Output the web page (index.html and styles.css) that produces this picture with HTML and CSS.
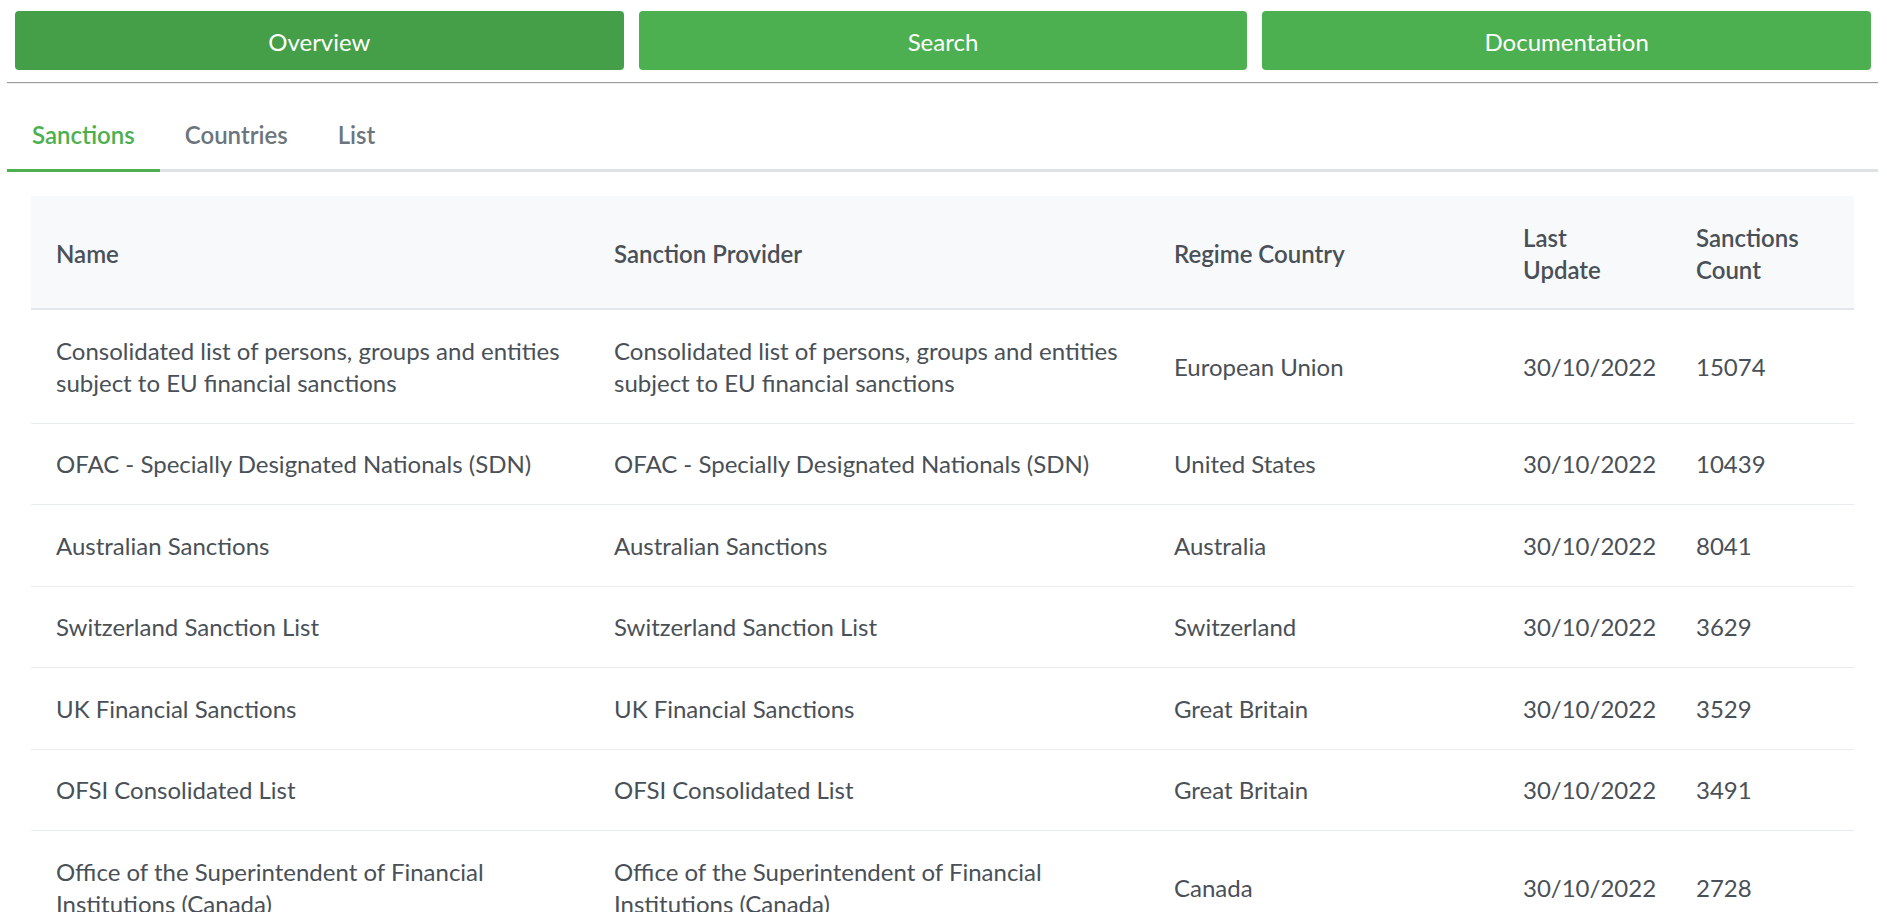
FILE: index.html
```html
<!DOCTYPE html>
<html lang="en">
<head>
<meta charset="utf-8">
<title>Sanctions Overview</title>
<link rel="stylesheet" href="styles.css">
</head>
<body>
<div class="page">
  <nav class="topnav">
    <a class="btn btn-active" href="#">Overview</a>
    <a class="btn" href="#">Search</a>
    <a class="btn" href="#">Documentation</a>
  </nav>
  <hr class="divider">
  <ul class="tabs">
    <li class="tab tab-active">Sanctions</li>
    <li class="tab">Countries</li>
    <li class="tab">List</li>
  </ul>
  <div class="table-wrap">
    <table class="data">
      <colgroup>
        <col class="c-name">
        <col class="c-provider">
        <col class="c-country">
        <col class="c-date">
        <col class="c-count">
      </colgroup>
      <thead>
        <tr>
          <th>Name</th>
          <th>Sanction Provider</th>
          <th>Regime Country</th>
          <th>Last Update</th>
          <th>Sanctions Count</th>
        </tr>
      </thead>
      <tbody>
        <tr>
          <td>Consolidated list of persons, groups and entities subject to EU financial sanctions</td>
          <td>Consolidated list of persons, groups and entities subject to EU financial sanctions</td>
          <td>European Union</td>
          <td>30/10/2022</td>
          <td>15074</td>
        </tr>
        <tr>
          <td>OFAC - Specially Designated Nationals (SDN)</td>
          <td>OFAC - Specially Designated Nationals (SDN)</td>
          <td>United States</td>
          <td>30/10/2022</td>
          <td>10439</td>
        </tr>
        <tr>
          <td>Australian Sanctions</td>
          <td>Australian Sanctions</td>
          <td>Australia</td>
          <td>30/10/2022</td>
          <td>8041</td>
        </tr>
        <tr>
          <td>Switzerland Sanction List</td>
          <td>Switzerland Sanction List</td>
          <td>Switzerland</td>
          <td>30/10/2022</td>
          <td>3629</td>
        </tr>
        <tr>
          <td>UK Financial Sanctions</td>
          <td>UK Financial Sanctions</td>
          <td>Great Britain</td>
          <td>30/10/2022</td>
          <td>3529</td>
        </tr>
        <tr>
          <td>OFSI Consolidated List</td>
          <td>OFSI Consolidated List</td>
          <td>Great Britain</td>
          <td>30/10/2022</td>
          <td>3491</td>
        </tr>
        <tr>
          <td>Office of the Superintendent of Financial Institutions (Canada)</td>
          <td>Office of the Superintendent of Financial Institutions (Canada)</td>
          <td>Canada</td>
          <td>30/10/2022</td>
          <td>2728</td>
        </tr>
      </tbody>
    </table>
  </div>
</div>
</body>
</html>
```

FILE: styles.css
```css
html, body {
  overflow: hidden;
}

body {
  margin: 0;
  font-family: "Segoe UI", Lato, "Noto Sans", sans-serif;
  font-size: 24px;
  line-height: 32px;
  color: #495057;
  background: #ffffff;
}

.page {
  margin: 0 9px 0 7px;
}

.topnav {
  display: flex;
  gap: 15px;
  padding: 11px 7px 0 8px;
}

.btn {
  flex: 1 1 0;
  height: 59px;
  box-sizing: border-box;
  padding-top: 2px;
  display: flex;
  align-items: center;
  justify-content: center;
  background: #4caf50;
  color: #ffffff;
  text-decoration: none;
  border-radius: 4px;
  font-size: 24px;
}

.btn-active {
  background: #449f48;
}

.divider {
  margin: 12px 0 0 0;
  height: 0;
  border: 0;
  border-top: 1px solid #9a9a9a;
  border-bottom: 1px solid #eeeeee;
}

.tabs {
  list-style: none;
  margin: 14px 0 0 0;
  padding: 0;
  display: flex;
  border-bottom: 3px solid #dee2e6;
}

.tab {
  padding: 21px 25px 18px;
  font-weight: 600;
  color: #6c757d;
  margin-bottom: -3px;
  border-bottom: 3px solid transparent;
}

.tab-active {
  color: #4caf50;
  border-bottom-color: #4caf50;
}

.table-wrap {
  padding: 24px 24px 0;
}

.data {
  width: 100%;
  table-layout: fixed;
  border-collapse: collapse;
}

.c-name { width: 558px; }
.c-provider { width: 560px; }
.c-country { width: 349px; }
.c-date { width: 173px; }
.c-count { width: 183px; }

.data th,
.data td {
  padding: 24.5px 25px 24px;
  text-align: left;
  vertical-align: middle;
}

.data thead th {
  background: #f8f9fa;
  font-weight: 600;
  color: #495057;
  padding: 25.5px 25px 22.5px;
  border-bottom: 2px solid #e3e6ea;
}

.data tbody td {
  border-bottom: 1px solid #e9ecef;
}
```
